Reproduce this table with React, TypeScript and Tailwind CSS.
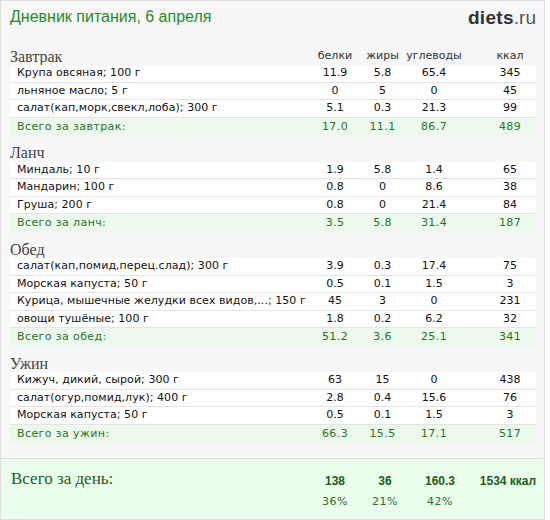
import React from "react";

type Row = [string, string, string, string, string];

const sections: { name: string; rows: Row[]; total: Row }[] = [
  {
    name: "Завтрак",
    rows: [
      ["Крупа овсяная; 100 г", "11.9", "5.8", "65.4", "345"],
      ["льняное масло; 5 г", "0", "5", "0", "45"],
      ["салат(кап,морк,свекл,лоба); 300 г", "5.1", "0.3", "21.3", "99"],
    ],
    total: ["Всего за завтрак:", "17.0", "11.1", "86.7", "489"],
  },
  {
    name: "Ланч",
    rows: [
      ["Миндаль; 10 г", "1.9", "5.8", "1.4", "65"],
      ["Мандарин; 100 г", "0.8", "0", "8.6", "38"],
      ["Груша; 200 г", "0.8", "0", "21.4", "84"],
    ],
    total: ["Всего за ланч:", "3.5", "5.8", "31.4", "187"],
  },
  {
    name: "Обед",
    rows: [
      ["салат(кап,помид,перец.слад); 300 г", "3.9", "0.3", "17.4", "75"],
      ["Морская капуста; 50 г", "0.5", "0.1", "1.5", "3"],
      ["Курица, мышечные желудки всех видов,...; 150 г", "45", "3", "0", "231"],
      ["овощи тушёные; 100 г", "1.8", "0.2", "6.2", "32"],
    ],
    total: ["Всего за обед:", "51.2", "3.6", "25.1", "341"],
  },
  {
    name: "Ужин",
    rows: [
      ["Кижуч, дикий, сырой; 300 г", "63", "15", "0", "438"],
      ["салат(огур,помид,лук); 400 г", "2.8", "0.4", "15.6", "76"],
      ["Морская капуста; 50 г", "0.5", "0.1", "1.5", "3"],
    ],
    total: ["Всего за ужин:", "66.3", "15.5", "17.1", "517"],
  },
];

const grid = "grid grid-cols-[1fr_50px_45px_58px_21px_52px] items-center";

function Cells({ r }: { r: Row }) {
  return (
    <>
      <div className="pl-[7px] whitespace-nowrap">{r[0]}</div>
      <div className="text-center">{r[1]}</div>
      <div className="text-center">{r[2]}</div>
      <div className="text-center">{r[3]}</div>
      <div />
      <div className="text-center">{r[4]}</div>
    </>
  );
}

export default function App() {
  return (
    <div className="w-[545px] h-[520px] border border-[#dedede] bg-[#f7f7f7] flex flex-col font-['DejaVu_Sans',sans-serif]">
      <div className="h-[38px] pl-[9px] pr-[8px] flex items-start justify-between pt-[6px]">
        <div className="text-[16px] leading-[20px] text-[#2a8a2a] font-['Liberation_Sans',sans-serif]">
          Дневник питания, 6 апреля
        </div>
        <div className="text-[19px] leading-[22px] text-[#333] font-['Liberation_Sans',sans-serif]">
          <span className="font-bold tracking-[0.3px]">diets</span>
          <span className="text-[#555]">.ru</span>
        </div>
      </div>
      <div className="pl-[9px] pr-[8px] flex flex-col">
        {sections.map((s, i) => (
          <div key={s.name} className="flex flex-col">
            <div className={`${grid} h-[26px] pt-[8px] text-[11px]`}>
              <div className="text-[16px] leading-[17px] text-[#444] font-['Liberation_Serif',serif]">
                {s.name}
              </div>
              {i === 0 ? (
                <>
                  <div className="text-center text-[#333]">белки</div>
                  <div className="text-center text-[#333]">жиры</div>
                  <div className="text-center text-[#333]">углеводы</div>
                  <div />
                  <div className="text-center text-[#333]">ккал</div>
                </>
              ) : null}
            </div>
            {s.rows.map((r) => (
              <div
                key={r[0]}
                className={`${grid} h-[17.5px] bg-white border-b border-[#e4e4e4] text-[11px] leading-[16px] text-[#111] tracking-[0.05px]`}
              >
                <Cells r={r} />
              </div>
            ))}
            <div className={`${grid} h-[18px] bg-[#eef9ee] text-[11px] leading-[16px] text-[#267326] tracking-[0.4px]`}>
              <Cells r={s.total} />
            </div>
          </div>
        ))}
      </div>
      <div className="mt-[15px] flex-1 border-t border-[#dcdcdc] bg-[#ebfeeb] flex">
        <div className="w-[309px] pl-[10px] pt-[10px] text-[17px] leading-[20px] text-[#1d5c1d] font-['Liberation_Serif',serif]">
          Всего за день:
        </div>
        <div className="flex pt-[14px]">
          {[
            ["138", "36%", "w-[50px]"],
            ["36", "21%", "w-[50px]"],
            ["160.3", "42%", "w-[60px]"],
          ].map(([a, b, w]) => (
            <div key={a} className={`${w} flex flex-col items-center`}>
              <div className="text-[12px] leading-[16px] font-bold text-[#1d5c1d] font-['Liberation_Sans',sans-serif]">
                {a}
              </div>
              <div className="mt-[5px] text-[11px] leading-[16px] text-[#2a6e2a] tracking-[0.5px]">{b}</div>
            </div>
          ))}
          <div className="w-[9px]" />
          <div className="w-[58px] text-center text-[12px] leading-[16px] font-bold text-[#1d5c1d] font-['Liberation_Sans',sans-serif] whitespace-nowrap">
            1534 ккал
          </div>
        </div>
      </div>
    </div>
  );
}
